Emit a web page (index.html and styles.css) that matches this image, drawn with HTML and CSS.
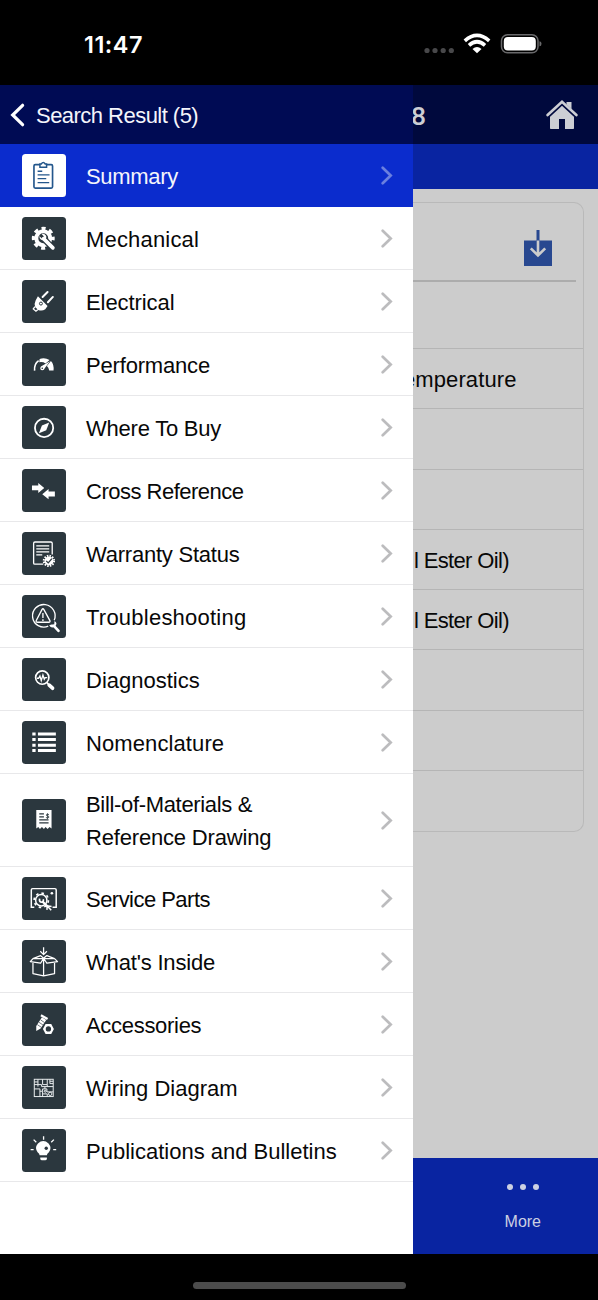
FILE: index.html
```html
<!DOCTYPE html>
<html lang="en">
<head>
<meta charset="utf-8">
<title>Search Result</title>
<link rel="stylesheet" href="styles.css">
</head>
<body>
<svg width="0" height="0" class="defs">
  <symbol id="chev" viewBox="0 0 12 19"><path d="M1.700 1.700 9.700 9.500 1.700 17.300" fill="none" stroke="currentColor" stroke-width="2.700" stroke-linecap="round"/></symbol>
</svg>
<div class="phone">
  <header class="status">
    <span class="time">11:47</span>
    <svg class="signals" width="120" height="22" viewBox="0 0 120 22">
      <g fill="#48484a"><circle cx="5" cy="17.500" r="2.600"/><circle cx="13" cy="17.500" r="2.600"/><circle cx="21.200" cy="17.500" r="2.600"/><circle cx="29.300" cy="17.500" r="2.600"/></g>
      <g fill="none" stroke="#fff" stroke-width="3.600"><path d="M42.800 7.800Q55-3 67.200 7.800"/><path d="M47 12.300Q55 5.200 63 12.300"/></g>
      <path d="M50.500 15.900Q55 12.200 59.500 15.900L55 20.200Z" fill="#fff"/>
      <rect x="79.500" y="1.700" width="36.500" height="18" rx="6" fill="none" stroke="#69696b" stroke-width="1.500"/>
      <rect x="81.800" y="3.900" width="32" height="13.700" rx="4" fill="#fff"/>
      <path d="M117.500 8.200q2 0 2 2.500t-2 2.500z" fill="#69696b"/>
    </svg>
  </header>

  <main class="main">
    <nav class="drawer">
      <div class="back">
        <svg width="15" height="24" viewBox="0 0 15 24"><path d="M12.600 2.300 2.700 12l9.900 9.700" fill="none" stroke="#fff" stroke-width="3.200" stroke-linecap="round"/></svg>
        <span>Search Result (5)</span>
      </div>
      <a class="row active"><svg class="icon" viewBox="0 0 131 131"><g fill="none" stroke="#24578c" stroke-width="5"><rect x="36" y="32" width="56" height="71" rx="4"/><path d="M54 40V30h4q6-9 12 0h4v10Z" fill="#fff" stroke-width="4.500"/><path d="M47 52h14M47 63h36M47 74h26M47 86h35" stroke-width="4"/></g></svg><span class="w1">Summary</span><svg class="go"><use href="#chev"/></svg></a>
      <a class="row"><svg class="icon" viewBox="0 0 131 131"><circle cx="64" cy="64" r="29" fill="none" stroke="#fff" stroke-width="11" stroke-dasharray="12 10.780" stroke-dashoffset="6"/><circle cx="64" cy="64" r="21" fill="none" stroke="#fff" stroke-width="12"/><path d="m68 68 27 28" stroke="#2b373e" stroke-width="19"/><path d="m65 65 28 28" stroke="#fff" stroke-width="11" stroke-linecap="round"/><path d="M53 53q-3 16 10 17 12-1 10-13-5-8-14-6l7 8-6 6-8-8" fill="#fff"/></svg><span class="w2">Mechanical</span><svg class="go"><use href="#chev"/></svg></a>
      <a class="row"><svg class="icon" viewBox="0 0 131 131"><path d="m48 49 29 29-7 10q-10 7-21 2L40 82q-4-11 1-20Z" fill="#fff"/><path d="m62 51 15-15M78 67l15-16" stroke="#fff" stroke-width="6" stroke-linecap="round"/><path d="m39 80-5 7 8 7 6-5" fill="none" stroke="#fff" stroke-width="4"/><circle cx="57" cy="71" r="4.500" fill="#fff" stroke="#2b373e" stroke-width="3"/></svg><span class="w3">Electrical</span><svg class="go"><use href="#chev"/></svg></a>
      <a class="row"><svg class="icon" viewBox="0 0 131 131"><path d="M38 83q-2-20 12-30" fill="none" stroke="#fff" stroke-width="5"/><path d="M53 48q15-6 30 3L71 62q-8-6-19-4Z" fill="#fff"/><path d="M87 54q10 10 8 29H82q-2-10-7-14Z" fill="#fff"/><path d="M84 55 57 71q-5 9 3 11 6 1 9-7Z" fill="#fff"/><circle cx="61" cy="76" r="2.500" fill="#2b373e"/></svg><span class="w4">Performance</span><svg class="go"><use href="#chev"/></svg></a>
      <a class="row"><svg class="icon" viewBox="0 0 131 131"><circle cx="66.500" cy="66" r="27.500" fill="none" stroke="#fff" stroke-width="5.500"/><path d="M82 50 73 73 51 82l9-23Z" fill="#fff"/></svg><span class="w5">Where To Buy</span><svg class="go"><use href="#chev"/></svg></a>
      <a class="row"><svg class="icon" viewBox="0 0 131 131"><path d="M30 50h19v-8l18 15-18 15v-8H30ZM99 68H80v-8L61 76l19 15v-8h19Z" fill="#fff"/></svg><span class="w6">Cross Reference</span><svg class="go"><use href="#chev"/></svg></a>
      <a class="row"><svg class="icon" viewBox="0 0 131 131"><path d="M64 97H39q-4 0-4-4V34q0-4 4-4h48q4 0 4 4v34M43 42h39M43 51h39M43 60h39M43 69h18" fill="none" stroke="#fff" stroke-width="4"/><circle cx="81" cy="87" r="13.500" fill="#fff"/><circle cx="81" cy="87" r="15.500" fill="none" stroke="#fff" stroke-width="6" stroke-dasharray="4.500 3.615"/><path d="m73 87 6 6 11-13" fill="none" stroke="#2b373e" stroke-width="4"/></svg><span class="w7">Warranty Status</span><svg class="go"><use href="#chev"/></svg></a>
      <a class="row"><svg class="icon" viewBox="0 0 131 131"><g fill="none" stroke="#fff" stroke-width="4"><path d="M79 94a34 34 0 1 1 18-18"/><path d="M66 44q-3-5-6 0L43 77q-2 5 4 5h33q6 0 4-5Z"/><path d="M63 54v15M63 73v5"/></g><path d="m96 93 14 15" stroke="#fff" stroke-width="8" stroke-linecap="round"/><path d="M82 91q6 11 17 4 10-10-1-17l-1 11h-8Z" fill="#fff"/></svg><span class="w8">Troubleshooting</span><svg class="go"><use href="#chev"/></svg></a>
      <a class="row"><svg class="icon" viewBox="0 0 131 131"><g fill="none" stroke="#fff"><circle cx="61" cy="59" r="20" stroke-width="5"/><path d="m75 74 6 7" stroke-width="5"/><path d="m82 82 10 9" stroke-width="11" stroke-linecap="round"/><path d="M45 61h5l4-7 4 14 5-17 4 13 3-5h6" stroke-width="4"/></g></svg><span class="w9">Diagnostics</span><svg class="go"><use href="#chev"/></svg></a>
      <a class="row"><svg class="icon" viewBox="0 0 131 131"><path d="M31 39h10M31 56h10M31 73h10M31 89h10M48 39h54M48 56h54M48 73h54M48 89h54" stroke="#fff" stroke-width="9"/></svg><span class="w10">Nomenclature</span><svg class="go"><use href="#chev"/></svg></a>
      <a class="row tall"><svg class="icon" viewBox="0 0 131 131"><path d="M43 33h46v56l-6-5-6 6-6-6-5 6-6-6-6 6-5-6-6 5Z" fill="#fff"/><path d="M52 45h14M52 54h14M52 63h28M52 72h28" stroke="#2b373e" stroke-width="3.500"/><path d="M81 47q-8-3-8 1 0 3 4 3t4 4q-2 4-9 1M77 43v17" fill="none" stroke="#2b373e" stroke-width="2.500"/></svg><span class="w11">Bill-of-Materials &amp;<br><b>Reference Drawing</b></span><svg class="go"><use href="#chev"/></svg></a>
      <a class="row"><svg class="icon" viewBox="0 0 131 131"><g fill="none" stroke="#fff"><path d="M37 91h-9V39q0-4 4-4h67q4 0 4 4v52H92" stroke-width="4.500"/><circle cx="58" cy="70" r="17" stroke-width="4.500"/><circle cx="58" cy="70" r="21.500" stroke-width="5" stroke-dasharray="7.500 9.386"/><path d="m61 73 16 16" stroke-width="7"/><path d="m76 87 12 13M75 99l1-12 13 2" stroke-width="4.500"/><path d="M53 65q-2 9 5 11 8 0 6-9" stroke-width="5"/></g><circle cx="90" cy="49" r="4" fill="#fff"/></svg><span class="w12">Service Parts</span><svg class="go"><use href="#chev"/></svg></a>
      <a class="row"><svg class="icon" viewBox="0 0 131 131"><g fill="none" stroke="#fff" stroke-width="3.800" stroke-linejoin="round"><path d="M65 22v21M55 34l10 10 10-10M33 67v34l32 7 33-7V67M65 56v52M65 55l-32 1-8 9 31 5 9-15 10 15 32-5-9-9ZM33 56l23-9 9 8 10-8 23 9"/></g></svg><span class="w13">What's Inside</span><svg class="go"><use href="#chev"/></svg></a>
      <a class="row"><svg class="icon" viewBox="0 0 131 131"><path d="m57 37 20 11" stroke="#fff" stroke-width="7"/><path d="m60 43 13 8-17 26-13 7V69Z" fill="#fff"/><path d="m56 51 12 8M51 58l12 8M46 65l12 8" stroke="#2b373e" stroke-width="2"/><path d="M71 63h17l8 15-8 15H71l-8-15Z" fill="#fff"/><circle cx="79.500" cy="78" r="8" fill="#2b373e"/></svg><span class="w14">Accessories</span><svg class="go"><use href="#chev"/></svg></a>
      <a class="row"><svg class="icon" viewBox="0 0 131 131"><g fill="none" stroke="#e8ecee" stroke-width="3"><rect x="37" y="40" width="57" height="52"/><path d="M37 56h22v6h35M48 40v16M62 40v16h14V40M37 48h11M84 46h10M84 40v13h10M37 69h17v23M54 76h8v-7h13v9h19M62 76v16M62 84h14v8M69 62v7M48 56v6M76 56v6"/><circle cx="85" cy="84" r="5"/><circle cx="70" cy="76" r="3"/></g></svg><span class="w15">Wiring Diagram</span><svg class="go"><use href="#chev"/></svg></a>
      <a class="row"><svg class="icon" viewBox="0 0 131 131"><path d="M53 79q0-5-6-9-10-13 1-26 16-15 32 0 11 13 1 26-6 4-6 9Z" fill="#fff"/><path d="M55 86h20v5q-2 3-5 3H60q-4 0-5-4Z" fill="#fff"/><circle cx="73" cy="58" r="5" fill="#2b373e"/><path d="M65 22v10M35 32l8 8M96 32l-8 8M26 62h9M94 62h9" stroke="#fff" stroke-width="4"/></svg><span class="w16">Publications and Bulletins</span><svg class="go"><use href="#chev"/></svg></a>
    </nav>

    <section class="page">
      <div class="title"><span>8</span>
        <svg width="32" height="30" viewBox="0 0 32 30"><path d="M20.500 2h5v9h-5z" fill="#ccced4"/><path d="M4 15 16 4l12 11v13.200q0 .8-.8.8H19V19h-6v10H4.800q-.8 0-.8-.8Z" fill="#ccced4"/><path d="M1.600 16.300 16 3l14.400 13.300" fill="none" stroke="#00093d" stroke-width="4.200"/><path d="M1.600 15 16 1.800 30.400 15" fill="none" stroke="#ccced4" stroke-width="2.600" stroke-linecap="round"/></svg>
      </div>
      <div class="band"></div>
      <div class="content">
        <div class="card">
          <div class="tools"><svg width="28" height="36" viewBox="0 0 28 36"><path d="M0 10.500h28V36H0Z" fill="#284890"/><path d="M14 0v11" stroke="#284890" stroke-width="3"/><path d="M14 10.500v15M6.800 18.300 14 25.500l7.200-7.200" fill="none" stroke="#ccc" stroke-width="2.600"/></svg></div>
          <div class="cell first"></div>
          <div class="cell"><span class="temp">emperature</span></div>
          <div class="cell"></div>
          <div class="cell"></div>
          <div class="cell"><span class="oil">l Ester Oil)</span></div>
          <div class="cell"><span class="oil">l Ester Oil)</span></div>
          <div class="cell"></div>
          <div class="cell"></div>
          <div class="cell"></div>
        </div>
      </div>
      <div class="tab"><div class="more"><div class="dots"><i></i><i></i><i></i></div><span>More</span></div></div>
    </section>
  </main>
  <footer class="home"><div class="bar"></div></footer>
</div>
</body>
</html>
```
FILE: styles.css
```css
* { box-sizing: border-box; }
body { margin: 0; background: #000; font-family: "Liberation Sans", Arial, sans-serif; font-size: 22px; color: #080808; }
.defs { display: none; }
.phone { width: 598px; height: 1300px; display: flex; flex-direction: column; overflow: hidden; background: #000; }
.status { height: 85px; display: flex; justify-content: space-between; align-items: flex-start; padding: 33px 56px 0 84px; }
.time { font: 600 23.500px/24px Inter, sans-serif; letter-spacing: 0.500px; color: #fff; }
.main { height: 1168.500px; display: flex; }
.drawer { width: 413px; background: #fff; display: flex; flex-direction: column; }
.back { height: 59px; background: #000b54; color: #f4f5fb; display: flex; align-items: center; gap: 11px; padding-left: 10px; }
.back span { white-space: nowrap; padding-top: 2px; letter-spacing: -0.530px; }
.row { height: 63px; border-bottom: 1.500px solid #e8e8ea; display: flex; align-items: center; padding: 1px 20px 0 22px; }
.row.active { background: #0b2ccd; color: #f4f5fb; border-color: #0b2ccd; }
.row.tall { height: 93px; line-height: 33px; }
.row span { flex: 1; margin-left: 20.500px; white-space: nowrap; padding-top: 3px; }
.row.tall span { padding-top: 1px; }
.row b { font-weight: normal; letter-spacing: -0.180px; }
.w1 { letter-spacing: -0.300px; }
.w2 { letter-spacing: 0.180px; }
.w3 { letter-spacing: -0.080px; }
.w4 { letter-spacing: -0.180px; }
.w5 { letter-spacing: -0.230px; }
.w6 { letter-spacing: -0.500px; }
.w7 { letter-spacing: -0.230px; }
.w8 { letter-spacing: 0.230px; }
.w10 { letter-spacing: 0.100px; }
.w11 { letter-spacing: -0.330px; }
.w12 { letter-spacing: -0.530px; }
.w13 { letter-spacing: -0.180px; }
.w14 { letter-spacing: -0.300px; }
.icon { width: 43.500px; height: 43.500px; border-radius: 3.500px; background: #2b373e; flex: none; }
.active .icon { background: #fff; }
.go { width: 12px; height: 19px; color: #bcbcbe; flex: none; }
.active .go { color: #6b80df; }

.page { width: 185px; overflow: hidden; background: #ccc; display: flex; flex-direction: column; }
.title { height: 59px; background: #00093d; color: #ccced4; display: flex; justify-content: space-between; align-items: center; padding: 0 20px 0 0; }
.title span { font: 500 26.500px/30px Roboto, sans-serif; margin-left: -2px; padding-top: 3px; }
.band { height: 45px; background: #0924a1; }
.content { flex: 1; padding-top: 13px; }
.card { width: 171px; height: 630px; border: 1.500px solid #b9b9b9; border-left: 0; border-radius: 0 10px 10px 0; }
.tools { height: 79px; width: 163px; border-bottom: 2px solid #acacac; display: flex; justify-content: flex-end; padding: 27px 24px 0 0; }
.cell { height: 60.300px; border-bottom: 1px solid #b5b5b5; display: flex; align-items: center; overflow: hidden; }
.cell.first { height: 67px; }
.cell:last-child { border-bottom: 0; }
.cell span { white-space: nowrap; padding-top: 2px; }
.temp { margin-left: -10px; letter-spacing: 0.100px; }
.oil { margin-left: 1px; letter-spacing: -0.650px; }
.tab { height: 95.500px; background: #0924a1; color: #ccd0e2; display: flex; justify-content: flex-end; padding: 26px 57px 0 0; }
.more { display: flex; flex-direction: column; align-items: center; gap: 22px; font-size: 16px; line-height: 20px; }
.dots { display: flex; gap: 7px; }
.dots i { width: 6px; height: 6px; border-radius: 50%; background: #ccd0e2; }
.home { flex: 1; display: flex; justify-content: center; padding-top: 28.500px; }
.bar { width: 213px; height: 6.500px; border-radius: 4px; background: #4b4b4b; }
```
